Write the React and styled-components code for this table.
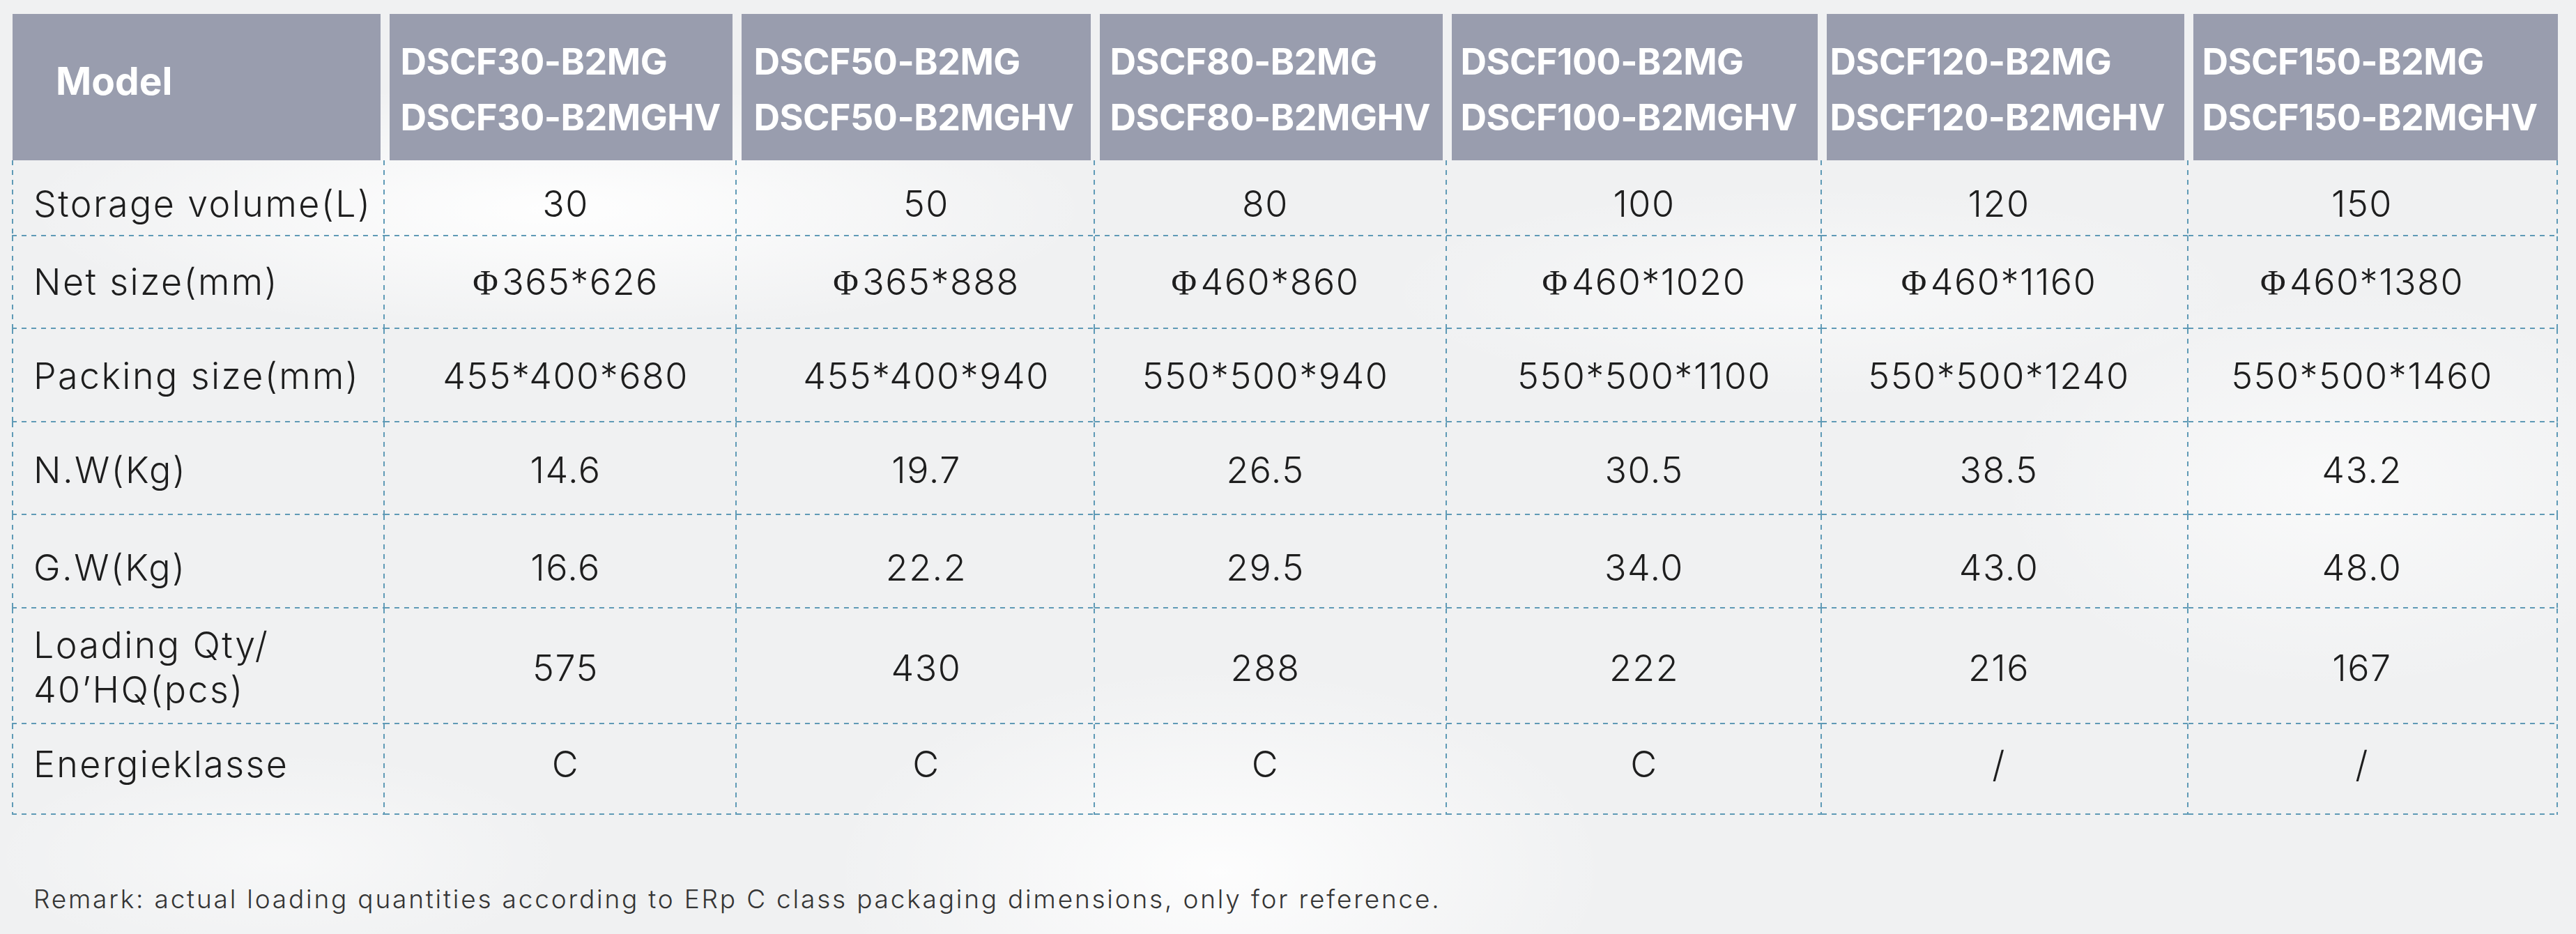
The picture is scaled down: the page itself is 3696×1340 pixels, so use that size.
import React from 'react';
import styled, { createGlobalStyle } from 'styled-components';

const LINE = '#5f9ab6';
const HEAD_BG = '#999dae';
const COLS = [535, 505, 514, 505, 538, 526, 530];
// values in the picture sit a little off the column centres
const NUDGE = [7, 15, -8, 14, -9, -16];

const dashH = `repeating-linear-gradient(90deg, ${LINE} 0 7px, transparent 7px 14px)`;
const dashV = `repeating-linear-gradient(180deg, ${LINE} 0 7px, transparent 7px 14px)`;

const GlobalStyle = createGlobalStyle`
  html, body {
    margin: 0;
    padding: 0;
  }
  body {
    background: #f1f2f3;
    font-family: Inter, "Noto Sans", sans-serif;
  }
`;

const Page = styled.div`
  width: 3696px;
  height: 1340px;
  box-sizing: border-box;
  padding: 20px 0 0 17px;
  overflow: hidden;
  background-color: #f0f1f2;
  background-image:
    radial-gradient(ellipse 1100px 260px at 800px 300px, rgba(255,255,255,0.95), transparent 70%),
    radial-gradient(ellipse 800px 420px at 1750px 1250px, rgba(255,255,255,0.85), transparent 70%),
    radial-gradient(ellipse 700px 420px at 3350px 700px, rgba(255,255,255,0.6), transparent 70%),
    radial-gradient(ellipse 900px 220px at 2600px 420px, rgba(255,255,255,0.5), transparent 70%),
    radial-gradient(ellipse 600px 220px at 400px 1230px, rgba(255,255,255,0.5), transparent 70%);
`;

const Table = styled.div`
  display: grid;
  grid-template-columns: ${COLS.map((w) => `${w}px`).join(' ')};
`;

const HeadCell = styled.div`
  height: 210px;
  box-sizing: border-box;
  margin: 0 ${(p) => (p.$last ? 0 : 6.5)}px 0 ${(p) => (p.$first ? 1 : 6.5)}px;
  padding: 29px 0 0 ${(p) => p.$pad}px;
  background: ${HEAD_BG};
  color: #fff;
  font-size: 52px;
  font-weight: 700;
  letter-spacing: -0.5px;
  line-height: 80px;
  white-space: nowrap;
  overflow: hidden;
`;

const ModelHead = styled(HeadCell)`
  display: flex;
  align-items: center;
  padding: 0 0 18px 62px;
  font-size: 55px;
  letter-spacing: 0;
`;

const Cell = styled.div`
  height: ${(p) => p.$h}px;
  box-sizing: border-box;
  display: flex;
  align-items: center;
  justify-content: ${(p) => (p.$label ? 'flex-start' : 'center')};
  padding-top: ${(p) => Math.max(p.$shift, 0) * 2}px;
  padding-bottom: ${(p) => Math.max(-p.$shift, 0) * 2}px;
  padding-left: ${(p) => (p.$label ? 31 : Math.max(p.$nudge || 0, 0) * 2)}px;
  padding-right: ${(p) => Math.max(-(p.$nudge || 0), 0) * 2}px;
  color: #1e1e1e;
  font-size: 52px;
  font-weight: 300;
  letter-spacing: ${(p) => (p.$label ? 2.4 : 1.5)}px;
  white-space: nowrap;
  background-image: ${dashH}, ${dashV}${(p) => (p.$label ? `, ${dashV}` : '')};
  background-size: 100% 2px, 2px 100%, 2px 100%;
  background-position: left bottom, right top, left top;
  background-repeat: no-repeat;
`;

const LabelLines = styled.span`
  line-height: 64px;
  white-space: normal;
`;

const Phi = styled.span`
  font-family: "Liberation Serif", "DejaVu Serif", serif;
  font-size: 50px;
  font-weight: 400;
  margin-right: 4px;
`;

const Remark = styled.p`
  margin: 98px 0 0 31px;
  color: #353535;
  font-size: 37px;
  font-weight: 300;
  line-height: 45px;
  letter-spacing: 2.8px;
`;

const heads = [
  { code: '30', pad: 16 },
  { code: '50', pad: 18 },
  { code: '80', pad: 15 },
  { code: '100', pad: 13 },
  { code: '120', pad: 5 },
  { code: '150', pad: 13 },
];

const rows = [
  { label: 'Storage volume(L)', h: 109, shift: 8, values: ['30', '50', '80', '100', '120', '150'] },
  {
    label: 'Net size(mm)',
    h: 133,
    shift: -1,
    phi: true,
    values: ['365*626', '365*888', '460*860', '460*1020', '460*1160', '460*1380'],
  },
  {
    label: 'Packing size(mm)',
    h: 134,
    shift: 0,
    values: ['455*400*680', '455*400*940', '550*500*940', '550*500*1100', '550*500*1240', '550*500*1460'],
  },
  { label: 'N.W(Kg)', h: 133, shift: 2, values: ['14.6', '19.7', '26.5', '30.5', '38.5', '43.2'] },
  { label: 'G.W(Kg)', h: 134, shift: 8, values: ['16.6', '22.2', '29.5', '34.0', '43.0', '48.0'] },
  {
    label: ['Loading Qty/', '40’HQ(pcs)'],
    h: 166,
    shift: 2,
    values: ['575', '430', '288', '222', '216', '167'],
  },
  { label: 'Energieklasse', h: 130, shift: -8, values: ['C', 'C', 'C', 'C', '/', '/'] },
];

const App = () => (
  <>
    <GlobalStyle />
    <Page>
      <Table>
        <ModelHead $first>Model</ModelHead>
        {heads.map((head, i) => (
          <HeadCell key={head.code} $pad={head.pad} $last={i === heads.length - 1}>
            DSCF{head.code}-B2MG
            <br />
            DSCF{head.code}-B2MGHV
          </HeadCell>
        ))}

        {rows.map((row, r) => (
          <React.Fragment key={r}>
            <Cell $label $h={row.h} $shift={row.shift}>
              {Array.isArray(row.label) ? (
                <LabelLines>
                  {row.label[0]}
                  <br />
                  {row.label[1]}
                </LabelLines>
              ) : (
                row.label
              )}
            </Cell>
            {row.values.map((value, c) => (
              <Cell key={c} $h={row.h} $shift={row.shift} $nudge={NUDGE[c]}>
                {row.phi && <Phi>Φ</Phi>}
                {value}
              </Cell>
            ))}
          </React.Fragment>
        ))}
      </Table>

      <Remark>
        Remark: actual loading quantities according to ERp C class packaging dimensions, only for reference.
      </Remark>
    </Page>
  </>
);

export default App;
